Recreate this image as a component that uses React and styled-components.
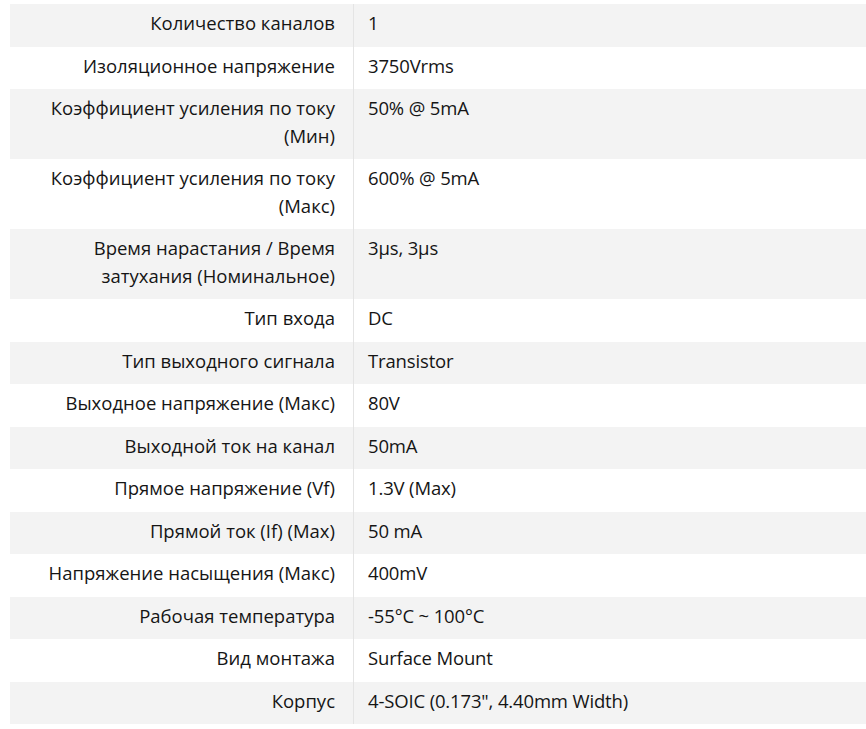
import styled, { createGlobalStyle } from 'styled-components';

const specs = [
  ['Количество каналов', '1'],
  ['Изоляционное напряжение', '3750Vrms'],
  ['Коэффициент усиления по току (Мин)', '50% @ 5mA'],
  ['Коэффициент усиления по току (Макс)', '600% @ 5mA'],
  ['Время нарастания / Время затухания (Номинальное)', '3µs, 3µs'],
  ['Тип входа', 'DC'],
  ['Тип выходного сигнала', 'Transistor'],
  ['Выходное напряжение (Макс)', '80V'],
  ['Выходной ток на канал', '50mA'],
  ['Прямое напряжение (Vf)', '1.3V (Max)'],
  ['Прямой ток (If) (Max)', '50 mA'],
  ['Напряжение насыщения (Макс)', '400mV'],
  ['Рабочая температура', '-55°C ~ 100°C'],
  ['Вид монтажа', 'Surface Mount'],
  ['Корпус', '4-SOIC (0.173", 4.40mm Width)'],
];

const GlobalStyle = createGlobalStyle`
  body {
    margin: 0;
    background: #fff;
    font-family: "Open Sans", "Noto Sans", sans-serif;
    color: #151515;
  }
`;

const Wrapper = styled.div`
  padding: 4px 0 0 10px;
`;

const SpecTable = styled.table`
  width: 100%;
  border-collapse: collapse;
  table-layout: fixed;
  font-size: 18.5px;
  line-height: 27.5px;
`;

const Row = styled.tr`
  background: ${({ $shaded }) => ($shaded ? '#f3f3f3' : '#fff')};
`;

const Label = styled.td`
  width: 325px;
  padding: 5px 18px 10px 0;
  text-align: right;
  vertical-align: top;
  border-right: 1px solid #e4e4e4;
`;

const Value = styled.td`
  padding: 5px 0 10px 14px;
  text-align: left;
  vertical-align: top;
  letter-spacing: -0.15px;
`;

export default function App() {
  return (
    <>
      <GlobalStyle />
      <Wrapper>
        <SpecTable>
          <tbody>
            {specs.map(([label, value], i) => (
              <Row key={label} $shaded={i % 2 === 0}>
                <Label>{label}</Label>
                <Value>{value}</Value>
              </Row>
            ))}
          </tbody>
        </SpecTable>
      </Wrapper>
    </>
  );
}
